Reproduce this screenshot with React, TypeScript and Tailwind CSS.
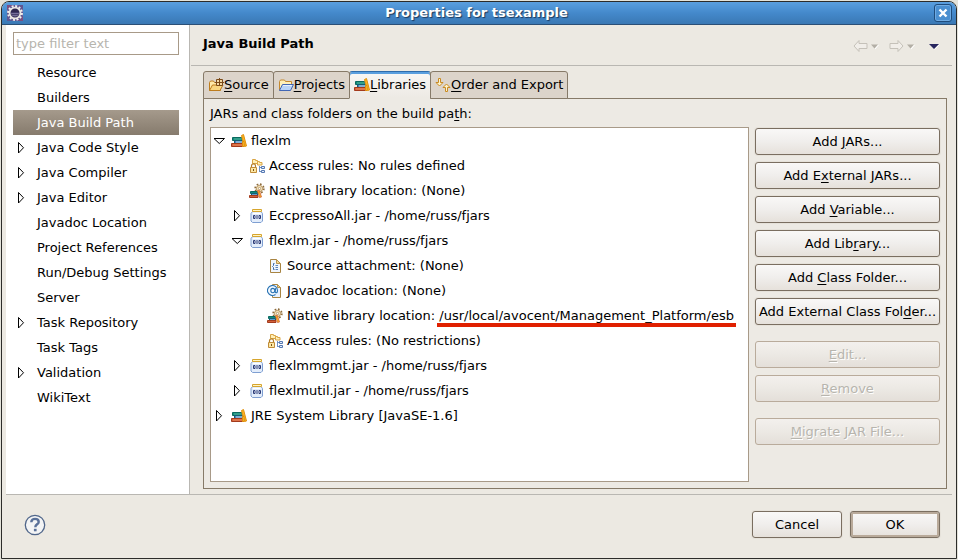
import React, { useState } from "react";
import clsx from "clsx";

type IconProps = { className?: string };

type TreeNode = {
  label: string;
  marked?: string;
  icon: React.FC<IconProps>;
  open?: boolean;
  children?: TreeNode[];
};

const EclipseIcon = () => (
  <svg width="16" height="16" viewBox="0 0 16 16">
    <rect width="16" height="16" fill="#5f5691" />
    <path d="M0 0h5L0 5zM16 16h-5l5-5z" fill="#7d4f80" />
    <circle cx="8" cy="8" r="6.900" fill="none" stroke="#f4f1ee" strokeWidth="2" strokeDasharray="2 1.610" />
    <circle cx="8" cy="8" r="5.400" fill="#2f2750" stroke="#eae6e3" strokeWidth="1.800" />
    <path d="M4 7.500h8a4 4 0 0 1-8 0z" fill="#77709a" />
    <path d="M4 7.500h8M4.600 9.500h6.800" stroke="#3b3262" strokeWidth=".8" />
  </svg>
);

const Books = () => (
  <>
    <path d="M1.500 4.500h9v3h-9z" fill="#0f8a7c" stroke="#0b6a5f" />
    <path d="M3 6h8" stroke="#58b59b" />
    <path d="M3.500 7.500h8v3h-8z" fill="#3f7fbf" stroke="#155f72" />
    <path d="M5 9h7" stroke="#bfe0ea" />
    <path d="M.500 10.500h11v3H.500z" fill="#d2613a" stroke="#a33a1c" />
    <path d="M2 12h9" stroke="#e88a5c" />
    <path d="M10.500 2.500l2-1 3 11.500-2 .500z" fill="#fbb423" stroke="#e0900c" />
    <path d="M11.500 8.500h1.500v5h-1.500z" fill="#fcc649" stroke="#e0900c" />
  </>
);

const LibraryIcon = ({ className }: IconProps) => (
  <svg className={className} width="16" height="16" viewBox="0 0 16 16">
    <Books />
  </svg>
);

const NativeIcon = ({ className }: IconProps) => (
  <svg className={className} width="16" height="16" viewBox="0 0 16 16">
    <circle cx="10.500" cy="5.500" r="4.400" fill="none" stroke="#8d6b3c" strokeWidth="1.600" strokeDasharray="1.700 1.750" />
    <circle cx="10.500" cy="5.500" r="3.100" fill="#fbeecb" stroke="#b08a50" />
    <circle cx="10.500" cy="5.500" r="1.200" fill="#fff" stroke="#a07a42" strokeWidth=".7" />
    <path d="M1.500 8.500h7v2h-7z" fill="#0f8a7c" stroke="#0b6a5f" />
    <path d="M2.500 10.500h6v2h-6z" fill="#5d9bd0" stroke="#155f72" />
    <path d="M.500 12.500h8.500v2H.500z" fill="#d2613a" stroke="#a33a1c" />
    <path d="M8.500 8l1.800-.700 2.200 6.700-2 .500z" fill="#fbb423" stroke="#d2613a" strokeWidth=".8" />
  </svg>
);

const AccessIcon = ({ className }: IconProps) => (
  <svg className={className} width="16" height="16" viewBox="0 0 16 16">
    <path d="M3.500 1.500h3v1h2v3h-5z" fill="#fff0b8" stroke="#d9a545" />
    <path d="M8.500 3.500h2v1h2.500v2.500H8.500z" fill="#fff0b8" stroke="#d9a545" />
    <path d="M2.500 9V7.800a2 2 0 0 1 4 0V9" fill="none" stroke="#b5802b" strokeWidth="1.200" />
    <path d="M1.500 9.500h6v5h-6z" fill="#fbe6a4" stroke="#c08c38" />
    <path d="M4.500 11v2" stroke="#7b5315" />
    <path d="M10.500 8v6M10.500 9.500h2M10.500 13.500h2" fill="none" stroke="#6f90c4" />
    <path d="M12.500 8.500h3v2h-3zM12.500 12.500h3v2h-3z" fill="#e5eefb" stroke="#5578b2" />
  </svg>
);

const JarIcon = ({ className }: IconProps) => (
  <svg className={className} width="16" height="16" viewBox="0 0 16 16">
    <path d="M3.500 3.500h8.500l1.500 2v7.500l-1.500 1.500h-8.500L2 13V5.500z" fill="#e3edfb" stroke="#7f9fd2" />
    <path d="M4 5.500h7.500" stroke="#fff" />
    <path d="M3.500 1.500h9v2h-9z" fill="#fff4c4" stroke="#d6a52f" />
    <path d="M4.500 7.500h1.500v3H4.500zM10 7.500h1.500v3H10zM8 7v4" fill="#fff" stroke="#2b3a78" />
  </svg>
);

const SourceFileIcon = ({ className }: IconProps) => (
  <svg className={className} width="16" height="16" viewBox="0 0 16 16">
    <path d="M3.500 1.500h6l4 4v9h-10z" fill="#f0f6ff" stroke="#a88442" />
    <path d="M9.500 1.500v4h4z" fill="#f3d890" stroke="#b89350" />
    <path d="M7.500 5.500h-1v2l-1 1 1 1v2h1" fill="none" stroke="#3a68a8" />
    <path d="M8.500 7.500h2.500M8.500 9.500h2.500M8.500 11.500h2.500" stroke="#5a83ba" />
  </svg>
);

const JavadocIcon = ({ className }: IconProps) => (
  <svg className={className} width="16" height="16" viewBox="0 0 16 16">
    <path d="M5.500 1.500h5l3 3v10h-8z" fill="#e8f1fd" stroke="#a88442" />
    <path d="M10.500 1.500v3h3z" fill="#f3d890" stroke="#b89350" />
    <circle cx="5.500" cy="7.500" r="5" fill="#f2f8ff" />
    <path d="M8.500 11.500A5 5 0 1 1 10.500 7.500c0 1.500-.600 2.300-1.400 2.300-.7 0-1-.6-.9-1.400l.5-3.200" fill="none" stroke="#2a74b4" strokeWidth="1.100" />
    <ellipse cx="5.800" cy="7.600" rx="2" ry="2.200" fill="none" stroke="#2a74b4" strokeWidth="1.100" />
  </svg>
);

const SourceFolderIcon = () => (
  <svg width="16" height="16" viewBox="0 0 16 16">
    <path d="M1.500 13.500v-8l1-1.500h3l1 1.500h6v8z" fill="#ffe9a8" stroke="#bd7c1d" />
    <path d="M1.500 13.500l3-5.500h10.500l-3 5.500z" fill="#f9d680" stroke="#bd7c1d" />
    <path d="M8.500 2.500h6v6h-6z" fill="#f4d9a2" stroke="#7b4a18" />
    <path d="M11.500 1v8M7 5.500h9" stroke="#7b4a18" />
  </svg>
);

const ProjectFolderIcon = () => (
  <svg width="16" height="16" viewBox="0 0 16 16">
    <path d="M1.500 13.500v-9l1-1.500h4l1 1.500h6V8" fill="#fff0b8" stroke="#c5892f" />
    <path d="M1.500 13.500l3-6h11l-3 6z" fill="#b9d4f8" stroke="#4267b5" />
    <path d="M5 8.500h9" stroke="#e3f0ff" />
  </svg>
);

const OrderIcon = () => (
  <svg width="16" height="16" viewBox="0 0 16 16">
    <path d="M3.500 1.500h2v4h2.500l-3.500 3.500-3.500-3.500h2.500z" fill="#fff4c8" stroke="#c98a22" />
    <path d="M10.500 14.500h2v-4h2.500l-3.500-3.500-3.500 3.500h2.500z" fill="#fff4c8" stroke="#c98a22" />
  </svg>
);

const tree: TreeNode[] = [
  {
    label: "flexlm",
    icon: LibraryIcon,
    open: true,
    children: [
      { label: "Access rules: No rules defined", icon: AccessIcon },
      { label: "Native library location: (None)", icon: NativeIcon },
      { label: "EccpressoAll.jar - /home/russ/fjars", icon: JarIcon, children: [] },
      {
        label: "flexlm.jar - /home/russ/fjars",
        icon: JarIcon,
        open: true,
        children: [
          { label: "Source attachment: (None)", icon: SourceFileIcon },
          { label: "Javadoc location: (None)", icon: JavadocIcon },
          {
            label: "Native library location: ",
            marked: "/usr/local/avocent/Management_Platform/esb",
            icon: NativeIcon,
          },
          { label: "Access rules: (No restrictions)", icon: AccessIcon },
        ],
      },
      { label: "flexlmmgmt.jar - /home/russ/fjars", icon: JarIcon, children: [] },
      { label: "flexlmutil.jar - /home/russ/fjars", icon: JarIcon, children: [] },
    ],
  },
  { label: "JRE System Library [JavaSE-1.6]", icon: LibraryIcon, children: [] },
];

const pages = [
  { name: "Resource" },
  { name: "Builders" },
  { name: "Java Build Path" },
  { name: "Java Code Style", more: true },
  { name: "Java Compiler", more: true },
  { name: "Java Editor", more: true },
  { name: "Javadoc Location" },
  { name: "Project References" },
  { name: "Run/Debug Settings" },
  { name: "Server" },
  { name: "Task Repository", more: true },
  { name: "Task Tags" },
  { name: "Validation", more: true },
  { name: "WikiText" },
];

const tabs = [
  { name: "&Source", icon: SourceFolderIcon },
  { name: "&Projects", icon: ProjectFolderIcon },
  { name: "&Libraries", icon: LibraryIcon },
  { name: "&Order and Export", icon: OrderIcon },
];

// the letter after "&" is the underlined access key
const Mnemonic = ({ text }: { text: string }) => {
  const [before, after] = text.split("&");
  if (!after) return <>{before}</>;
  return (
    <span>
      {before}
      <span className="underline underline-offset-2">{after[0]}</span>
      {after.slice(1)}
    </span>
  );
};

const Arrow = ({ open }: { open?: boolean }) => (
  <svg width="16" height="16" viewBox="0 0 16 16" fill="#fff" stroke="#000">
    {open ? <path d="M3 5.500h10.500L8.250 10.500z" /> : <path d="M5.500 2.500v10.500l5-5.250z" />}
  </svg>
);

const TreeItem = ({ node, level }: { node: TreeNode; level: number }) => {
  const [open, setOpen] = useState(!!node.open);
  const Icon = node.icon;
  return (
    <li>
      <div className="flex h-[25px] items-center">
        <div className={clsx("flex shrink-0 justify-end", level === 0 && "w-4", level === 1 && "w-[34px]", level === 2 && "w-[52px]")}>
          {node.children && (
            <button type="button" aria-label={node.label} onClick={() => setOpen(!open)}>
              <Arrow open={open} />
            </button>
          )}
        </div>
        <Icon className="ml-1 shrink-0" />
        <span className="ml-1 whitespace-pre">
          {node.label}
          {node.marked && (
            <span className="relative">
              {node.marked}
              <span className="absolute -inset-x-0.5 -bottom-1 h-1 bg-[#e02000]" />
            </span>
          )}
        </span>
      </div>
      {open && node.children && node.children.length > 0 && (
        <ul>
          {node.children.map((child) => (
            <TreeItem key={child.label} node={child} level={level + 1} />
          ))}
        </ul>
      )}
    </li>
  );
};

const Button = ({ text, disabled, primary }: { text: string; disabled?: boolean; primary?: boolean }) => (
  <button
    type="button"
    disabled={disabled}
    className={clsx(
      "h-[27px] rounded-[3px] border text-center whitespace-nowrap",
      disabled
        ? "border-[#b9ab9b] bg-linear-to-b from-[#f3f0ed] via-[#ece9e4] to-[#e4dfd9] text-[#b7b5ae] [text-shadow:1px_1px_0_#fff]"
        : "border-[#7a6e60] bg-linear-to-b from-[#f9f8f7] via-[#f0eeec] to-[#e6e1db] shadow-[0_0_0_1px_#e6e2da]",
      primary && "inset-ring-2 inset-ring-[#b9aa9a]"
    )}
  >
    <Mnemonic text={text} />
  </button>
);

const NavArrow = ({ back }: { back?: boolean }) => (
  <svg width="26" height="14" viewBox="0 0 26 14">
    <path
      d={back ? "M1 7l5-5.500v3h8v5H6v3z" : "M14 7L9 1.500v3H1v5h8v3z"}
      fill="#f1eee9"
      stroke="#c5c1b9"
    />
    <path d="M18 5.500h7l-3.500 4z" fill="#b3afa6" />
    <path d="M25.500 6L22 10" stroke="#fff" />
  </svg>
);

const Sidebar = () => {
  const [page, setPage] = useState("Java Build Path");
  return (
    <aside className="w-[184px] shrink-0 border-r border-[#b9b7b2] bg-white px-[7px] pt-[7px]">
      <input
        type="text"
        aria-label="Filter"
        placeholder="type filter text"
        className="block h-[23px] w-[166px] border border-[#a89a88] bg-white px-0.5 outline-none placeholder:text-[#b7b5ae]"
      />
      <ul className="mt-[5px] w-[166px]">
        {pages.map((p) => (
          <li key={p.name}>
            <button
              type="button"
              onClick={() => setPage(p.name)}
              className={clsx(
                "flex h-[25px] w-full items-center gap-2 text-left whitespace-nowrap",
                page === p.name && "bg-linear-to-b from-[#a59a8c] to-[#867b6d] text-white"
              )}
            >
              <span className="w-4">{p.more && <Arrow />}</span>
              {p.name}
            </button>
          </li>
        ))}
      </ul>
    </aside>
  );
};

const App = () => {
  const [tab, setTab] = useState("&Libraries");
  return (
    <div className="flex h-screen flex-col bg-[#e4e3da] p-px font-['DejaVu_Sans',sans-serif] text-[13px] leading-4 text-black">
      <div className="flex grow flex-col overflow-hidden rounded-t-lg border border-[#2c2c2a] bg-[#ece9e2]">
        <header className="flex h-[23px] shrink-0 items-center border-b border-[#2b4f76] bg-linear-to-b from-[#5a9fdf] via-[#4489cb] to-[#3a78b4] pr-1 pl-[5px] text-white">
          <EclipseIcon />
          <h1 className="grow pr-1 text-center font-bold [text-shadow:1px_1px_1px_#1c3a5c]">Properties for tsexample</h1>
          <button
            type="button"
            aria-label="Close"
            className="flex h-[18px] w-[18px] items-center justify-center rounded-[3px] border border-[#1f4c7c] bg-[#4a8fd0] inset-ring inset-ring-[#6fabe3]"
          >
            <svg width="10" height="10" viewBox="0 0 10 10">
              <path d="M1.500 1.500l7 7M8.500 1.500l-7 7" stroke="#fff" strokeWidth="2.400" />
            </svg>
          </button>
        </header>

        <div className="flex grow pl-1">
          <Sidebar />
          <main className="flex min-w-0 grow flex-col">
            <div className="mr-1 ml-px flex h-[41px] items-center border-b border-[#b9b7b2] pr-3 pl-3">
              <h2 className="grow pb-0.5 font-bold">Java Build Path</h2>
              <div className="flex items-center gap-[10px] pt-0.5">
                <button type="button" aria-label="Back" disabled>
                  <NavArrow back />
                </button>
                <button type="button" aria-label="Forward" disabled>
                  <NavArrow />
                </button>
                <button type="button" aria-label="Menu" className="pl-[3px]">
                  <svg width="12" height="14" viewBox="0 0 12 14">
                    <path d="M1 5h10L6 10z" fill="#28265f" />
                    <path d="M11.500 5.500L6.500 10.500" stroke="#fff" />
                  </svg>
                </button>
              </div>
            </div>

            <div className="flex grow flex-col pt-[5px] pr-[9px] pb-[5px] pl-[13px]">
              <div className="relative -mb-px flex" role="tablist">
                {tabs.map(({ name, icon: Icon }) => (
                  <button
                    key={name}
                    type="button"
                    role="tab"
                    aria-selected={tab === name}
                    onClick={() => setTab(name)}
                    className={clsx(
                      "-mr-px flex h-[28px] items-center rounded-t-[3px] border border-[#867a68] px-1",
                      tab === name
                        ? "border-t-[#2f6cab] border-b-[#edeae4] bg-linear-to-b from-[#f8f7f5] to-[#edeae4] shadow-[inset_0_2px_0_#5a9fdf]"
                        : "bg-[#dcd4ca]"
                    )}
                  >
                    <Icon />
                    <Mnemonic text={name} />
                  </button>
                ))}
              </div>

              <section className="flex grow flex-col border border-[#867a68] bg-[#edeae4] px-[6px] pt-[7px] pb-[6px]">
                <p>
                  <Mnemonic text="JARs and class folders on the build pa&th:" />
                </p>
                <div className="mt-[5px] flex grow gap-[6px]">
                  <ul className="min-w-0 grow border border-[#a89a88] bg-white">
                    {tree.map((node) => (
                      <TreeItem key={node.label} node={node} level={0} />
                    ))}
                  </ul>
                  <div className="flex w-[185px] shrink-0 flex-col gap-[7px] pt-px">
                    <Button text="Add &JARs..." />
                    <Button text="Add E&xternal JARs..." />
                    <Button text="Add &Variable..." />
                    <Button text="Add Lib&rary..." />
                    <Button text="Add &Class Folder..." />
                    <Button text="Add External Class Fol&der..." />
                    <div className="flex flex-col gap-[7px] pt-[9px]">
                      <Button text="&Edit..." disabled />
                      <Button text="&Remove" disabled />
                    </div>
                    <div className="flex flex-col pt-[9px]">
                      <Button text="&Migrate JAR File..." disabled />
                    </div>
                  </div>
                </div>
              </section>
            </div>
          </main>
        </div>

        <footer className="mx-1 flex h-[64px] shrink-0 items-center justify-between border-t border-[#b9b7b2] pr-3 pb-1 pl-[18px]">
          <button type="button" aria-label="Help">
            <svg width="22" height="22" viewBox="0 0 22 22">
              <circle cx="11" cy="11" r="9.700" fill="#f3f4f5" stroke="#50668a" strokeWidth="1.300" />
              <path d="M7.300 8.300C7.300 5.800 9 4.900 11 4.900s3.700 1 3.700 3c0 2.500-3.400 2.400-3.400 5.300" fill="none" stroke="#5a7199" strokeWidth="2.400" />
              <path d="M9.900 14.800h2.700v2.500H9.900z" fill="#5a7199" />
            </svg>
          </button>
          <div className="grid grid-cols-[90px_90px] gap-2">
            <Button text="Cancel" />
            <Button text="OK" primary />
          </div>
        </footer>
      </div>
    </div>
  );
};

export default App;
